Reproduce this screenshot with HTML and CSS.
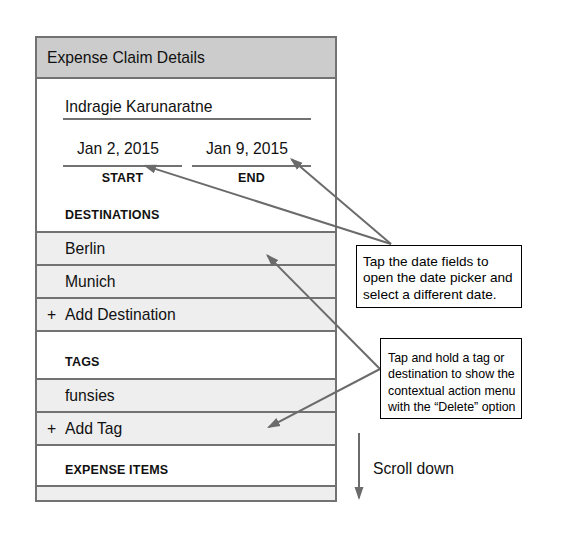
FILE: index.html
```html
<!DOCTYPE html>
<html lang="en">
<head>
  <meta charset="UTF-8">
  <meta name="viewport" content="width=device-width, initial-scale=1.0">
  <title>Expense Claim Details</title>
  <link rel="stylesheet" href="styles.css">
</head>
<body>
  <div class="page">
    <div class="screen">
      <div class="screen-header">Expense Claim Details</div>
      <div class="screen-body">
        <div class="name-field">Indragie Karunaratne</div>
        <div class="date-range">
          <div class="date-field">
            <div class="date-value">Jan 2, 2015</div>
            <div class="date-label">START</div>
          </div>
          <div class="date-field">
            <div class="date-value">Jan 9, 2015</div>
            <div class="date-label">END</div>
          </div>
        </div>
      </div>

      <div class="section-label">DESTINATIONS</div>
      <ul class="rows">
        <li class="row">Berlin</li>
        <li class="row">Munich</li>
        <li class="row row-add"><span class="plus">+</span>Add Destination</li>
      </ul>

      <div class="section-label">TAGS</div>
      <ul class="rows">
        <li class="row">funsies</li>
        <li class="row row-add"><span class="plus">+</span>Add Tag</li>
      </ul>

      <div class="section-label section-label-last">EXPENSE ITEMS</div>
      <div class="row-stub"></div>
    </div>

    <!-- annotation arrows -->
    <svg class="arrows" width="582" height="540" viewBox="0 0 582 540">
      <defs>
        <marker id="head" markerWidth="13" markerHeight="10" refX="11" refY="5" orient="auto" markerUnits="userSpaceOnUse">
          <path d="M0,0.5 L13,5 L0,9.5 z" fill="#6b6b6b"/>
        </marker>
      </defs>
      <line x1="391" y1="244" x2="144.9" y2="165.6" marker-end="url(#head)"/>
      <line x1="391" y1="244" x2="291.5" y2="159.3" marker-end="url(#head)"/>
      <line x1="380" y1="369" x2="267.4" y2="255.4" marker-end="url(#head)"/>
      <line x1="380" y1="369" x2="268.8" y2="427.1" marker-end="url(#head)"/>
      <line x1="359" y1="433" x2="359" y2="498" marker-end="url(#head)"/>
    </svg>

    <div class="callout callout-dates">
      Tap the date fields to<br>
      open the date picker and<br>
      select a different date.
    </div>
    <div class="callout callout-hold">
      Tap and hold a tag or<br>
      destination to show the<br>
      contextual action menu<br>
      with the “Delete” option
    </div>
    <div class="scroll-hint">Scroll down</div>
  </div>
</body>
</html>
```

FILE: styles.css
```css
body {
  margin: 0;
  background-color: #fff;
  font-family: "Liberation Sans", Arial, sans-serif;
  color: #111;
}

.page {
  position: relative;
  width: 582px;
  height: 540px;
  padding: 36px 0 0 35px;
  box-sizing: border-box;
}

.screen {
  width: 302px;
  border: 2px solid #727272;
  box-sizing: border-box;
  background-color: #fff;
}

.screen-header {
  height: 39px;
  line-height: 39px;
  padding-left: 10px;
  background-color: #cccccc;
  border-bottom: 2px solid #727272;
  font-size: 15.7px;
}

.screen-body {
  padding: 18px 24px 0 26px;
}

.name-field {
  font-size: 15.7px;
  line-height: 20px;
  padding: 0 0 1px 2px;
  border-bottom: 2px solid #727272;
}

.date-range {
  display: flex;
  gap: 10px;
  margin-top: 19px;
}

.date-field {
  flex: 1;
}

.date-value {
  font-size: 15.7px;
  line-height: 20px;
  padding: 0 0 6px 14px;
  border-bottom: 2px solid #727272;
}

.date-label {
  margin-top: 5px;
  text-align: center;
  font-size: 12.5px;
  font-weight: bold;
  letter-spacing: 0.2px;
  line-height: 13px;
}

.section-label {
  padding: 23px 0 9px 28px;
  font-size: 12.5px;
  font-weight: bold;
  letter-spacing: 0.2px;
  line-height: 14px;
}

.section-label-last {
  padding-top: 17px;
  padding-bottom: 8px;
}

.rows {
  list-style: none;
  margin: 0;
  padding: 0;
  border-bottom: 2px solid #727272;
}

.row {
  height: 31px;
  line-height: 31px;
  padding-left: 28px;
  border-top: 2px solid #727272;
  background-color: #eeeeee;
  font-size: 15.7px;
}

.row-add {
  padding-left: 10px;
}

.plus {
  display: inline-block;
  width: 18px;
}

.row-stub {
  height: 13px;
  border-top: 2px solid #727272;
  background-color: #eeeeee;
}

.arrows {
  position: absolute;
  left: 0;
  top: 0;
  pointer-events: none;
}

.arrows line {
  stroke: #6b6b6b;
  stroke-width: 2;
}

.callout {
  position: absolute;
  box-sizing: border-box;
  border: 1px solid #000;
  background-color: #fff;
  line-height: 16.3px;
  color: #000;
  white-space: nowrap;
}

.callout-dates {
  left: 356px;
  top: 245px;
  width: 166px;
  height: 63px;
  padding: 8px 0 0 6px;
  font-size: 13.6px;
}

.callout-hold {
  left: 380px;
  top: 338px;
  width: 142px;
  height: 81px;
  padding: 11px 0 0 7px;
  font-size: 12.4px;
}

.scroll-hint {
  position: absolute;
  left: 373px;
  top: 460px;
  font-size: 15.7px;
  line-height: 18px;
}
```
